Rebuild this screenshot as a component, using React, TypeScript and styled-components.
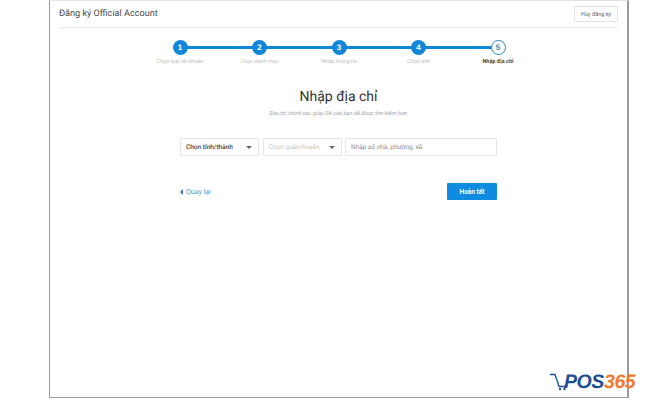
import React from "react";
import styled, { createGlobalStyle } from "styled-components";

const GlobalStyle = createGlobalStyle`
    html, body {
        margin: 0;
        padding: 0;
        background: #fff;
    }
    body {
        font-family: Roboto, "Liberation Sans", sans-serif;
        text-rendering: geometricPrecision;
    }
`

const Page = styled.div`
    position: relative;
    width: 660px;
    height: 404px;
    overflow: hidden;
    background: #fff;
`

const Frame = styled.div`
    box-sizing: border-box;
    width: 580px;
    height: 398px;
    margin-left: 49px;
    padding: 0 9px;
    border: 1px solid #9c9c9c;
    border-top-color: #e4e4e4;
    border-width: 1px 2px 1px 1px;
`

const Header = styled.header`
    display: flex;
    align-items: center;
    justify-content: space-between;
    height: 26px;
    border-bottom: 1px solid #ececec;
`

const Title = styled.h1`
    margin: 0;
    font-size: 9.1px;
    font-weight: 400;
    color: #4a4a4a;
`

const CancelButton = styled.button`
    box-sizing: border-box;
    width: 44px;
    height: 16px;
    padding: 0;
    border: 1px solid #e2e2e2;
    border-radius: 1px;
    background: #fff;
    font-family: inherit;
    font-size: 5.5px;
    color: #666;
`

const Stepper = styled.ol`
    display: grid;
    grid-template-columns: repeat(5, 79.5px);
    justify-content: center;
    margin: 12px 0 0;
    padding: 0 0 0 1px;
    list-style: none;
`

const Step = styled.li<{ $first?: boolean }>`
    position: relative;
    display: flex;
    flex-direction: column;
    align-items: center;
    gap: 4px;

    &::before {
        content: "";
        display: ${({ $first }) => ($first ? "none" : "block")};
        position: absolute;
        top: 6px;
        right: 50%;
        width: 100%;
        height: 3px;
        background: #0f86d8;
    }
`

const StepDot = styled.span<{ $active?: boolean }>`
    position: relative;
    z-index: 1;
    box-sizing: border-box;
    display: flex;
    align-items: center;
    justify-content: center;
    width: 15px;
    height: 15px;
    border-radius: 50%;
    border: ${({ $active }) => ($active ? "1.5px solid #2a86c0" : "none")};
    background: ${({ $active }) => ($active ? "#fff" : "#0f86d8")};
    color: ${({ $active }) => ($active ? "#2a86c0" : "#fff")};
    font-family: "Liberation Sans", Arial, sans-serif;
    font-size: 8px;
    font-weight: 700;
`

const StepLabel = styled.span<{ $active?: boolean }>`
    font-size: 5.5px;
    line-height: 7px;
    white-space: nowrap;
    font-weight: ${({ $active }) => ($active ? 700 : 400)};
    color: ${({ $active }) => ($active ? "#444" : "#bdbdbd")};
`

const Content = styled.main`
    width: 317px;
    margin: 22px auto 0 121px;
`

const Heading = styled.h2`
    margin: 0;
    text-align: center;
    font-size: 14px;
    line-height: 18px;
    font-weight: 400;
    color: #333;
`

const Subheading = styled.p`
    margin: 5px 0 0;
    text-align: center;
    font-size: 5.5px;
    line-height: 7px;
    color: #a3a3a3;
`

const Fields = styled.div`
    display: grid;
    grid-template-columns: 79px 79px 152px;
    justify-content: space-between;
    margin-top: 20px;
`

const Field = styled.div`
    box-sizing: border-box;
    display: flex;
    align-items: center;
    justify-content: space-between;
    height: 18px;
    padding: 0 6px 0 5px;
    border: 1px solid #e4e4e4;
    border-radius: 1px;
`

const FieldText = styled.span<{ $strong?: boolean; $muted?: boolean }>`
    font-size: 6.5px;
    font-weight: ${({ $strong }) => ($strong ? 500 : 400)};
    color: ${({ $strong, $muted }) => ($strong ? "#444" : $muted ? "#c4c4c4" : "#8c8c8c")};
`

const Caret = styled.i`
    width: 0;
    height: 0;
    border-left: 3px solid transparent;
    border-right: 3px solid transparent;
    border-top: 3px solid #666;
`

const Actions = styled.div`
    display: flex;
    align-items: center;
    justify-content: space-between;
    margin-top: 27px;
`

const BackLink = styled.a`
    display: flex;
    align-items: center;
    gap: 3px;
    font-size: 7px;
    color: #5c93b5;
`

const BackArrow = styled.i`
    width: 0;
    height: 0;
    border-top: 3px solid transparent;
    border-bottom: 3px solid transparent;
    border-right: 3px solid #3a7ca5;
`

const FinishButton = styled.button`
    width: 50px;
    height: 17px;
    padding: 0;
    border: none;
    border-radius: 1px;
    background: #0f8be0;
    color: #fff;
    font-family: inherit;
    font-size: 6.5px;
    font-weight: 700;
`

const Logo = styled.div`
    position: absolute;
    left: 549px;
    top: 372px;
    display: flex;
    align-items: center;
    font-family: "Liberation Sans", Arial, sans-serif;
    font-size: 19.5px;
    line-height: 20px;
    font-style: italic;
    font-weight: 700;
    letter-spacing: -0.4px;
`

const LogoBlue = styled.span`
    color: #1c4f92;
    margin-left: -3px;
`

const LogoOrange = styled.span`
    color: #ef7a2b;
`

const steps = ["Chọn loại tài khoản", "Chọn danh mục", "Nhập thông tin", "Chọn ảnh", "Nhập địa chỉ"];

const CartIcon = () => (
    <svg width="18" height="20" viewBox="0 0 18 20" fill="none">
        <path d="M1 2.5 H6 L10 14.5 H17" stroke="#1c4f92" strokeWidth="1.4" />
        <path d="M6.8 5 L9.5 11.5" stroke="#3b8fd6" strokeWidth="1.2" />
        <circle cx="11" cy="17" r="1.2" fill="#1c4f92" />
        <circle cx="15.5" cy="17" r="1.2" fill="#1c4f92" />
    </svg>
);

const App: React.FC = () => {
    return (
        <Page>
            <GlobalStyle />
            <Frame>
                <Header>
                    <Title>Đăng ký Official Account</Title>
                    <CancelButton>Hủy đăng ký</CancelButton>
                </Header>
                <Stepper>
                    {steps.map((label, i) => {
                        const active = i === steps.length - 1;
                        return (
                            <Step key={label} $first={i === 0}>
                                <StepDot $active={active}>{i + 1}</StepDot>
                                <StepLabel $active={active}>{label}</StepLabel>
                            </Step>
                        );
                    })}
                </Stepper>
                <Content>
                    <Heading>Nhập địa chỉ</Heading>
                    <Subheading>Địa chỉ chính xác giúp OA của bạn dễ được tìm kiếm hơn</Subheading>
                    <Fields>
                        <Field>
                            <FieldText $strong>Chọn tỉnh/thành</FieldText>
                            <Caret />
                        </Field>
                        <Field>
                            <FieldText $muted>Chọn quận/huyện</FieldText>
                            <Caret />
                        </Field>
                        <Field>
                            <FieldText>Nhập số nhà, phường, xã</FieldText>
                        </Field>
                    </Fields>
                    <Actions>
                        <BackLink>
                            <BackArrow />
                            Quay lại
                        </BackLink>
                        <FinishButton>Hoàn tất</FinishButton>
                    </Actions>
                </Content>
            </Frame>
            <Logo>
                <CartIcon />
                <LogoBlue>POS</LogoBlue>
                <LogoOrange>365</LogoOrange>
            </Logo>
        </Page>
    );
};

export default App;
